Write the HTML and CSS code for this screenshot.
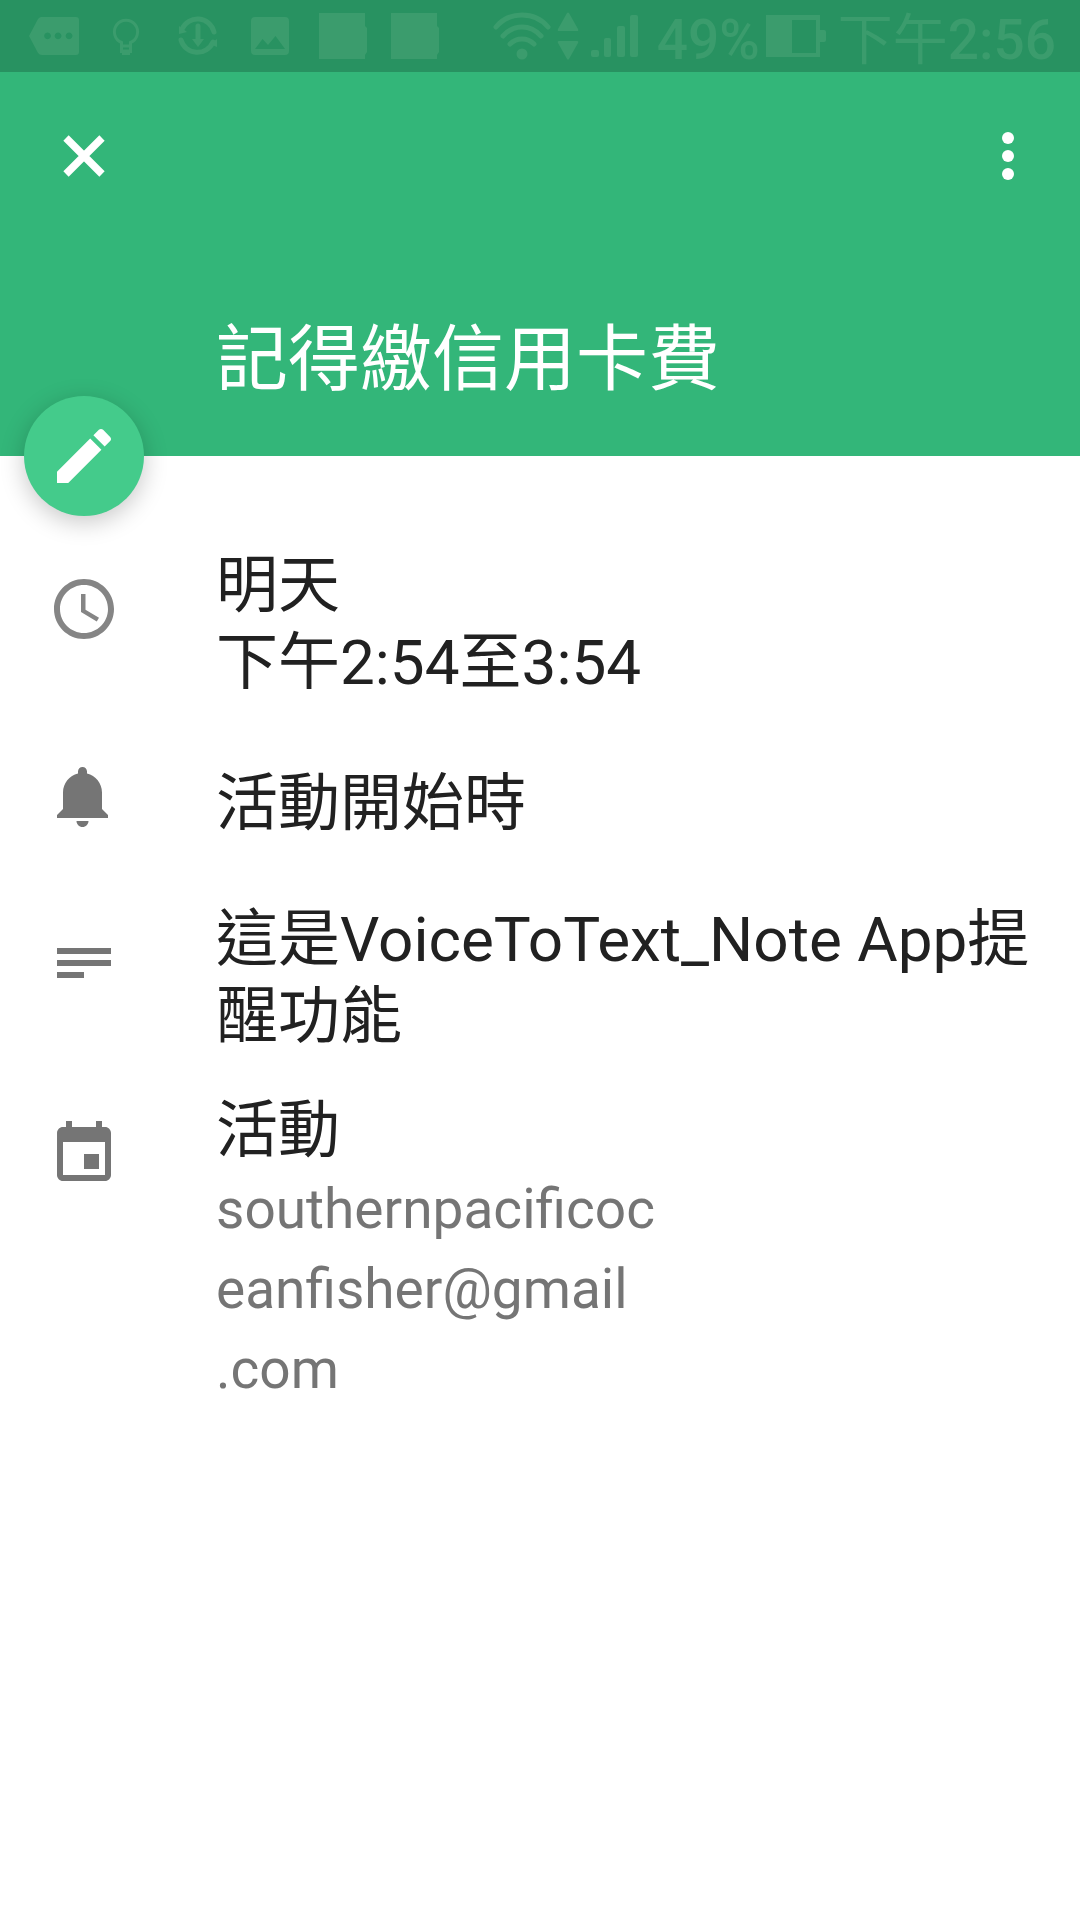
FILE: index.html
```html
<!DOCTYPE html>
<html lang="zh-Hant">
<head>
<meta charset="utf-8">
<meta name="viewport" content="width=device-width, initial-scale=1">
<title>記得繳信用卡費</title>
<link rel="stylesheet" href="styles.css">
</head>
<body>
<div class="status-bar">
  <div class="status-group">
    <svg class="status-icon" viewBox="0 0 72 72" aria-hidden="true"><path fill-rule="evenodd" d="M23 17H58a3 3 0 0 1 3 3V52a3 3 0 0 1-3 3H24a5 5 0 0 1-4-2L11 36 20 19a5 5 0 0 1 3-2zM29.500 32.500a3.400 3.400 0 1 0 .1 0zM40 32.500a3.400 3.400 0 1 0 .1 0zM51 32.500a3.400 3.400 0 1 0 .1 0z"/></svg>
    <svg class="status-icon" viewBox="0 0 72 72" aria-hidden="true"><path class="line thin" d="M31.500 53V42.500a11.600 11.600 0 1 1 9 0V53M31.500 46h9M31.500 51h9"/><path d="M32 50h8v5h-8z"/></svg>
    <svg class="status-icon" viewBox="0 0 72 72" aria-hidden="true"><path class="line" d="M20 29a17 17 0 0 1 32 3M19 40a17 17 0 0 0 32 2M36 26v16"/><path d="M17 26l8 6-8 2zM55 39l-7 5 7 3zM30 39h12l-6 8z"/></svg>
    <svg class="status-icon" viewBox="0 0 72 72" aria-hidden="true"><path fill-rule="evenodd" d="M21 17H51a4 4 0 0 1 4 4V51a4 4 0 0 1-4 4H21a4 4 0 0 1-4-4V21a4 4 0 0 1 4-4zM21 49H51L41.500 36 34 45 28.500 39z"/></svg>
    <svg class="status-icon" viewBox="0 0 72 72" aria-hidden="true"><path d="M13 13H59V26l2 2V52l-2 3v4H13z"/></svg>
    <svg class="status-icon" viewBox="0 0 72 72" aria-hidden="true"><path d="M13 13H59V26l2 2V52l-2 3v4H13z"/></svg>
  </div>
  <div class="status-group status-system">
    <svg class="network-icon" viewBox="0 0 146 72" aria-hidden="true">
      <path class="line" d="M3 27Q13 15 29 15T55 27M10 36Q18 27 29 27T48 36M17 44Q22 39 29 39T41 44"/>
      <circle cx="29" cy="54" r="5.500"/>
      <path d="M74 13q1-1 2 0l9 16q1 2-1 2H66q-2 0-1-2zM74 59q1 1 2 0l9-16q1-2-1-2H66q-2 0-1 2z"/>
      <rect x="98" y="50" width="8" height="7" rx="2"/><rect x="111" y="38" width="7" height="19" rx="2"/><rect x="124" y="26" width="8" height="31" rx="2"/><rect x="137" y="15" width="8" height="42" rx="2"/>
    </svg>
    <span class="battery-level">49%</span>
    <svg class="battery-icon" viewBox="0 0 60 72" aria-hidden="true"><path fill-rule="evenodd" d="M0 15H54V30H58q2 0 2 2v8q0 2-2 2H54V57H0zM26 20V53H50V20z"/></svg>
    <span class="clock"><span class="meridiem">下午</span>2:56</span>
  </div>
</div>

<header class="event-header">
  <div class="toolbar">
    <button class="icon-button" type="button" aria-label="關閉"><svg class="icon" viewBox="0 0 24 24"><path class="cross" d="M6 6L18 18M18 6L6 18"/></svg></button>
    <button class="icon-button" type="button" aria-label="更多選項"><svg class="icon" viewBox="0 0 24 24"><circle cx="12" cy="6" r="2"/><circle cx="12" cy="12" r="2"/><circle cx="12" cy="18" r="2"/></svg></button>
  </div>
  <h1 class="event-title">記得繳信用卡費</h1>
  <button class="edit-button" type="button" aria-label="編輯"><svg class="icon" viewBox="0 0 24 24"><path d="M3 17.250V21h3.750L17.810 9.940l-3.750-3.750L3 17.250zM20.710 7.040c.39-.39.39-1.020 0-1.410l-2.340-2.340c-.39-.39-1.020-.39-1.410 0l-1.830 1.830 3.750 3.750 1.830-1.830z"/></svg></button>
</header>

<main class="details">
  <section class="row">
    <svg class="icon row-icon clock-icon" viewBox="0 0 24 24" aria-hidden="true"><path d="M11.990 2C6.470 2 2 6.480 2 12s4.470 10 9.990 10C17.520 22 22 17.520 22 12S17.520 2 11.990 2zM12 20c-4.420 0-8-3.580-8-8s3.580-8 8-8 8 3.580 8 8-3.580 8-8 8z"/><path d="M12.500 7H11v6l5.250 3.150.75-1.230-4.500-2.670z"/></svg>
    <div class="row-text"><p>明天</p><p>下午2:54至3:54</p></div>
  </section>
  <section class="row compact">
    <svg class="icon row-icon" viewBox="0 0 24 24" aria-hidden="true"><path d="M11.500 22c1.100 0 2-.9 2-2h-4c0 1.100.9 2 2 2zm6.500-6v-5.500c0-3.070-2.130-5.640-5-6.320V3.500c0-.83-.67-1.500-1.500-1.500S10 2.670 10 3.500v.68c-2.870.68-5 3.250-5 6.320V16l-2 2v1h17v-1l-2-2z"/></svg>
    <div class="row-text"><p>活動開始時</p></div>
  </section>
  <section class="row">
    <svg class="icon row-icon" viewBox="0 0 24 24" aria-hidden="true"><path d="M3 7h18v2H3zM3 11h18v2H3zM3 15h9v2H3z"/></svg>
    <div class="row-text"><p>這是VoiceToText_Note App提醒功能</p></div>
  </section>
  <section class="row">
    <svg class="icon row-icon" viewBox="0 0 24 24" aria-hidden="true"><path d="M17 12h-5v5h5v-5zM16 1v2H8V1H6v2H5c-1.110 0-1.990.9-1.990 2L3 19c0 1.100.89 2 2 2h14c1.100 0 2-.9 2-2V5c0-1.100-.9-2-2-2h-1V1h-2zm3 18H5V8h14v11z"/></svg>
    <div class="row-text"><p>活動</p><p class="account">southernpacificoc<br>eanfisher@gmail<br>.com</p></div>
  </section>
</main>
</body>
</html>
```
FILE: styles.css
```css
:root {
  --green: #33b679;
  --green-dark: #289261;
  --green-light: #44cb8b;
  --status-ink: #3b9c6d;
  --text: #212121;
  --muted: #757575;
}

* {
  box-sizing: border-box;
}

body {
  margin: 0;
  background: #fff;
  color: var(--text);
  font-family: Roboto, "Noto Sans CJK TC", sans-serif;
}

h1,
p {
  margin: 0;
  font-weight: 400;
}

svg {
  display: block;
  flex: none;
  fill: currentColor;
}

button {
  padding: 0;
  border: 0;
  background: none;
  color: #fff;
  cursor: pointer;
}

.icon {
  width: 72px;
  height: 72px;
}

/* System status bar */
.status-bar {
  display: flex;
  justify-content: space-between;
  height: 72px;
  padding: 0 24px 0 18px;
  overflow: hidden;
  background: var(--green-dark);
  color: var(--status-ink);
  font-size: 55px;
  font-weight: 500;
  line-height: 80px;
}

.status-group {
  display: flex;
}

.status-icon {
  width: 72px;
  height: 72px;
}

.network-icon {
  width: 146px;
  height: 72px;
  margin-right: 18px;
}

.battery-icon {
  width: 60px;
  height: 72px;
  margin: 0 12px 0 6px;
}

.meridiem {
  font-weight: 400;
}

.line {
  fill: none;
  stroke: currentColor;
  stroke-width: 5;
  stroke-linecap: round;
}

.thin {
  stroke-width: 3;
  stroke-linecap: butt;
}

/* Event header */
.event-header {
  position: relative;
  padding-bottom: 36px;
  background: var(--green);
  color: #fff;
}

.toolbar {
  display: flex;
  justify-content: space-between;
  padding: 48px 36px 108px 48px;
}

.cross {
  fill: none;
  stroke: currentColor;
  stroke-width: 2.5;
}

.event-title {
  padding: 0 48px 0 216px;
  font-size: 72px;
  line-height: 120px;
}

.edit-button {
  position: absolute;
  bottom: -60px;
  left: 24px;
  display: grid;
  place-items: center;
  width: 120px;
  height: 120px;
  border-radius: 50%;
  background: var(--green-light);
  box-shadow: 0 6px 24px rgba(0, 0, 0, 0.22);
}

/* Event details */
.details {
  display: flex;
  flex-direction: column;
  gap: 37px;
  padding: 91px 48px;
}

.row {
  display: grid;
  grid-template-columns: 72px 1fr;
  column-gap: 96px;
}

.row-icon {
  margin-top: 26px;
  color: var(--muted);
}

.clock-icon {
  color: #858585;
}

.row-text {
  font-size: 62px;
  line-height: 77px;
}

/* One-line rows */
.compact {
  padding-bottom: 22px;
}

.compact .row-icon {
  margin-top: 23px;
}

.compact .row-text {
  margin-top: 27px;
}

.account {
  color: var(--muted);
  font-size: 55px;
  line-height: 80px;
}
```
